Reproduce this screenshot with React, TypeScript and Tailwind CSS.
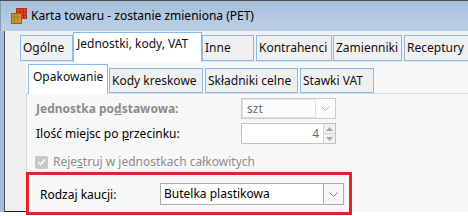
const font = "font-['Noto_Sans',sans-serif]";

const mainTabs = [
  { label: "Ogólne", cls: "ml-0 w-[53px]" },
  { label: "Jednostki, kody, VAT", cls: "ml-0 w-[129px]", active: true },
  { label: "Inne", cls: "ml-0 w-[52px]" },
  { label: "Kontrahenci", cls: "ml-[2px] w-[76px]" },
  { label: "Zamienniki", cls: "ml-px w-[69px]" },
  { label: "Receptury", cls: "ml-[2px] w-[70px]" },
];

const subTabs = [
  { label: "Opakowanie", cls: "ml-[2px] w-[80px]", active: true },
  { label: "Kody kreskowe", cls: "ml-px w-[94px]" },
  { label: "Składniki celne", cls: "ml-[2px] w-[93px]" },
  { label: "Stawki VAT", cls: "ml-[2px] w-[74px]" },
];

function Chevron({ color = "#8a8a8a" }: { color?: string }) {
  return (
    <svg width="9" height="5" viewBox="0 0 9 5">
      <path d="M0.5 0.5 L4.5 4.5 L8.5 0.5" fill="none" stroke={color} strokeWidth="1" />
    </svg>
  );
}

function TitleIcon() {
  return (
    <svg width="16" height="16" viewBox="0 0 16 16">
      <rect x="5.5" y="0.5" width="10" height="10" fill="#e0412e" stroke="#b3301f" />
      <path d="M5.5 4 H15.5 M5.5 7.5 H15.5 M9 0.5 V10.5 M12.5 0.5 V10.5" stroke="#b3301f" strokeWidth="1" />
      <rect x="0.5" y="5.5" width="10" height="10" fill="#c99a2e" stroke="#8c6a12" />
      <path d="M3.5 5.5 V15.5 M6.5 5.5 V15.5 M0.5 9 H10.5" stroke="#a27a1a" strokeWidth="1" />
    </svg>
  );
}

export default function App() {
  return (
    <div className={`relative w-[468px] h-[216px] overflow-hidden bg-white text-[12px] text-[#111] ${font}`}>
      <div className="flex h-[212px] flex-col border-t border-[#4a4a4a]">
        {/* title bar */}
        <div className="flex h-[30px] items-center border-l border-[#8a9bb0] bg-gradient-to-b from-[#a7bfdc] to-[#bcd0e7] pl-[10px]">
          <TitleIcon />
          <span className="ml-[4px] pb-px text-[12px] text-black">Karta towaru - zostanie zmieniona (PET)</span>
        </div>

        <div className="flex min-h-0 flex-1">
          {/* window frame */}
          <div className="w-[5px] border-r border-[#45566d] bg-[#a3bddc]" />

          <div className="flex min-w-0 flex-1 flex-col bg-[#f0f0f0]">
            {/* main tabs */}
            <div className="flex h-[30px] items-end pl-[15px]">
              {mainTabs.map((t) =>
                t.active ? (
                  <div
                    key={t.label}
                    className={`relative z-10 -mb-px flex h-[30px] shrink-0 items-start border border-b-0 border-[#86bdf0] bg-white pl-[3px] pt-[2px] ${t.cls}`}
                  >
                    {t.label}
                  </div>
                ) : (
                  <div
                    key={t.label}
                    className={`flex h-[26px] shrink-0 items-center border border-[#86bdf0] bg-[#f0f0f0] pl-[2px] ${t.cls}`}
                  >
                    {t.label}
                  </div>
                )
              )}
            </div>

            <div className="flex min-h-0 flex-1">
              {/* gutter */}
              <div className="w-[21px] border-b border-[#1a1a1a]" />

              <div className="flex min-w-0 flex-1 flex-col bg-[#f7f7f7]">
                {/* sub tabs */}
                <div className="flex h-[32px] items-end border-t border-[#e4e4e4]">
                  {subTabs.map((t) =>
                    t.active ? (
                      <div
                        key={t.label}
                        className={`relative z-10 -mb-px flex h-[30px] shrink-0 items-start border border-b-0 border-[#86bdf0] bg-white pl-[4px] pt-[3px] ${t.cls}`}
                      >
                        {t.label}
                      </div>
                    ) : (
                      <div
                        key={t.label}
                        className={`flex h-[25px] shrink-0 items-center border border-[#86bdf0] bg-[#f0f0f0] pl-[2px] ${t.cls}`}
                      >
                        {t.label}
                      </div>
                    )
                  )}
                </div>

                {/* sub page */}
                <div className="flex min-h-0 flex-1 flex-col border-l border-t border-[#dcdcdc]">
                  <div className="ml-[9px] mt-[4px] flex h-[21px] items-center">
                    <span className="w-[205px] font-bold text-[#8c8c8c]">
                      Jednostka po<span className="underline">d</span>stawowa:
                    </span>
                    <div className="flex h-[21px] w-[95px] border border-[#c3cedc] bg-[#fbfbfb]">
                      <div className="flex flex-1 items-center border border-[#d5e3f3] pl-[4px] text-[#6e6e6e]">szt</div>
                      <div className="flex w-[19px] items-center justify-center">
                        <Chevron color="#b5b5b5" />
                      </div>
                    </div>
                  </div>

                  <div className="ml-[9px] mt-[4px] flex h-[21px] items-center">
                    <span className="w-[205px] text-black">
                      Ilość miejsc po <span className="underline">p</span>rzecinku:
                    </span>
                    <div className="flex h-[21px] w-[95px] border border-[#b8c4d2] bg-white">
                      <div className="flex flex-1 items-center justify-end pr-[4px] text-[#6e6e6e]">4</div>
                      <div className="flex w-[12px] flex-col border-l border-[#d6d6d6] bg-[#f0f0f0]">
                        <div className="flex flex-1 items-center justify-center border-b border-[#d6d6d6]">
                          <svg width="7" height="4" viewBox="0 0 7 4">
                            <path d="M0 4 L3.5 0 L7 4 Z" fill="#a6a6a6" />
                          </svg>
                        </div>
                        <div className="flex flex-1 items-center justify-center">
                          <svg width="7" height="4" viewBox="0 0 7 4">
                            <path d="M0 0 L3.5 4 L7 0 Z" fill="#a6a6a6" />
                          </svg>
                        </div>
                      </div>
                    </div>
                  </div>

                  <div className="ml-[8px] mt-[11px] flex h-[14px] items-center gap-[5px] text-[#8c8c8c]">
                    <div className="flex h-[13px] w-[13px] items-center justify-center rounded-[2px] bg-[#c8c8c8]">
                      <svg width="9" height="8" viewBox="0 0 9 8">
                        <path d="M1 4 L3.5 6.5 L8 1.5" fill="none" stroke="#fff" strokeWidth="1.4" />
                      </svg>
                    </div>
                    <span>
                      Reje<span className="underline">s</span>truj w jednostkach całkowitych
                    </span>
                  </div>

                  {/* highlighted row */}
                  <div className="-ml-px mt-[3px] flex h-[43px] w-[326px] shrink-0 items-start border-[3px] border-[#e3232b] pl-[11px] pt-[8px]">
                    <span className="mt-[3px] w-[120px] text-black">Rodzaj kaucji:</span>
                    <div className="flex h-[22px] w-[184px] border border-[#adadad] bg-white">
                      <div className="flex flex-1 items-center pl-[3px] text-black">Butelka plastikowa</div>
                      <div className="flex w-[20px] items-center justify-center border-l border-[#adadad] bg-[#f6f6f6]">
                        <Chevron color="#7a7a7a" />
                      </div>
                    </div>
                  </div>
                </div>
              </div>
            </div>
          </div>
        </div>
      </div>
    </div>
  );
}
